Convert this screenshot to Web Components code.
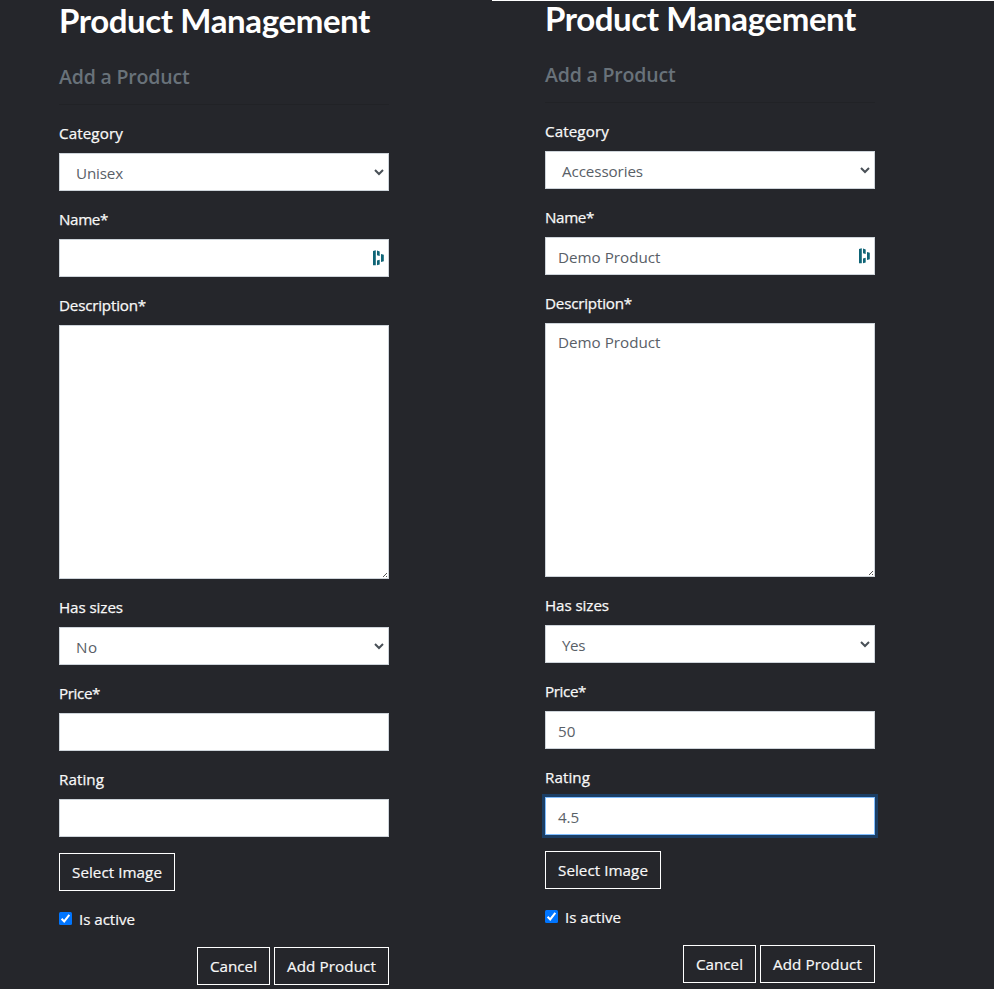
<!DOCTYPE html>
<html lang="en">
<head>
<meta charset="utf-8">
<title>Product Management</title>
<style>
html{background:#25262b}
body{margin:0;height:989px;overflow:hidden;background:#25262b;font:15.2px/24px "Open Sans","Noto Sans",sans-serif;color:#f8f8f8}
</style>
</head>
<body>
<product-page></product-page>
<script>
const define = (name, html, init) => customElements.define(name, class extends HTMLElement {
  connectedCallback() {
    if (this.shadowRoot) return;
    const root = this.attachShadow({ mode: 'open' });
    root.innerHTML = html;
    if (init) init(this, root);
  }
});

// Text whose letter spacing is adjusted so the run takes the width given in "w".
define('fit-text', `<style>:host{display:inline-block;white-space:nowrap}span{display:inline-block}</style><span><slot></slot></span>`, (el, root) => {
  const w = Number(el.getAttribute('w'));
  if (!w) return;
  const span = root.querySelector('span');
  const n = el.textContent.length;
  span.style.letterSpacing = ((w - span.getBoundingClientRect().width) / n) + 'px';
});

define('page-heading', `<style>
:host{display:block;height:105px;box-sizing:border-box;border-bottom:1px solid #212226;margin-bottom:16px}
h2{margin:0;font:700 33px/38px Lato,sans-serif;color:#fff;padding-top:1px}
h5{margin:0;padding-top:26px;font:600 19.5px/24px "Open Sans",sans-serif;color:#69727a}
</style><h2><fit-text w="311">Product Management</fit-text></h2><h5><fit-text w="130.5">Add a Product</fit-text></h5>`);

define('form-field', `<style>
:host{display:block;margin-bottom:16px}
.label{height:24px;margin-bottom:8px;-webkit-text-stroke:.25px}
</style><div class="label"><slot name="label"></slot></div><slot></slot>`);

define('text-box', `<style>
:host{display:flex;box-sizing:border-box;height:38px;padding:7px 4px 5px 12px;border:1px solid #ced4da;background:#fff;color:#596067;justify-content:space-between;align-items:flex-start}
:host([kind=select]){padding-left:16px}
:host([kind=area]){height:254px;padding-top:6px;padding-right:0;padding-bottom:0}
:host([focused]){border-color:#80bdff;box-shadow:0 0 0 3px #1b3e65}
svg{display:none;flex:none;margin-left:auto}
:host([kind=select]) .arrow,:host([kind=manager]) .manager{display:block}
:host([kind=area]) .grip{display:block;align-self:flex-end}
</style><slot></slot>
<svg class="arrow" width="10" height="8" viewBox="0 0 10 8" style="margin-top:8px"><path d="M1 1 5 5 9 1" fill="none" stroke="#495057" stroke-width="2"/></svg>
<svg class="manager" width="11" height="16" viewBox="0 0 11 16" style="margin-top:3px"><path d="M0 1 2.8.3V15.2H0ZM4 .6 6.7 1.4V6L4 5.2ZM4 10.6 6.7 9.8V14.4L4 15.2ZM8 4 10.8 4.8V11.2L8 12Z" fill="#0e6476"/></svg>
<svg class="grip" width="5" height="5" viewBox="0 0 5 5" shape-rendering="crispEdges"><path d="M3 0h1v1H3ZM2 1h1v1H2ZM1 2h1v1H1ZM0 3h1v1H0ZM3 3h1v1H3Z" fill="#555"/></svg>`);

define('outline-button', `<style>
:host{display:flex;justify-content:center;box-sizing:border-box;height:38px;border:1px solid #fff;padding-top:6px;-webkit-text-stroke:.2px}
</style><slot></slot>`, el => { el.style.width = el.getAttribute('w') + 'px'; });

define('check-field', `<style>
:host{display:flex;height:24px;gap:7px;margin-top:16px;-webkit-text-stroke:.2px}
svg{margin-top:5px}
</style><svg width="13" height="13" viewBox="0 0 13 13"><rect width="13" height="13" rx="1.5" fill="#0075ff"/><path d="M2.6 6.7 5.2 9.4 10.3 2.8" fill="none" stroke="#fff" stroke-width="2"/></svg><slot></slot>`);

define('product-form', `<style>
:host{display:block;width:330px}
.actions{display:flex;justify-content:flex-end;gap:4px;margin-top:16px}
</style><div class="body"></div>`, (el, root) => {
  const t = (s, w) => s ? `<fit-text w="${w}">${s}</fit-text>` : '';
  const v = name => t(...(el.getAttribute(name) || '').split('|'));
  const field = (label, w, name, kind = '', extra = '') =>
    `<form-field><fit-text slot="label" w="${w}">${label}</fit-text><text-box kind="${kind}" ${extra}>${v(name)}</text-box></form-field>`;
  root.querySelector('.body').innerHTML = '<page-heading></page-heading>'
    + field('Category', 64, 'category', 'select')
    + field('Name*', 49, 'name', 'manager')
    + field('Description*', 87, 'description', 'area')
    + field('Has sizes', 64, 'sizes', 'select')
    + field('Price*', 41, 'price')
    + field('Rating', 45, 'rating', '', el.hasAttribute('focused') ? 'focused' : '')
    + `<outline-button w="116">${t('Select Image', 90)}</outline-button>
       <check-field>${t('Is active', 56)}</check-field>
       <div class="actions"><outline-button w="73">${t('Cancel', 47)}</outline-button><outline-button w="115">${t('Add Product', 89)}</outline-button></div>`;
});

define('product-page', `<style>
:host{display:grid;grid-template-columns:492px 1fr;height:989px}
section{padding-left:59px}
section+section{padding-left:53px;border-top:1px solid #fff}
section+section product-form{margin-top:-3px}
</style>
<section><product-form category="Unisex|47" sizes="No|21.5"></product-form></section>
<section><product-form category="Accessories|81" name="Demo Product|102.5" description="Demo Product|102.5" sizes="Yes|23" price="50|17.5" rating="4.5|21" focused></product-form></section>`);
</script>
</body>
</html>
